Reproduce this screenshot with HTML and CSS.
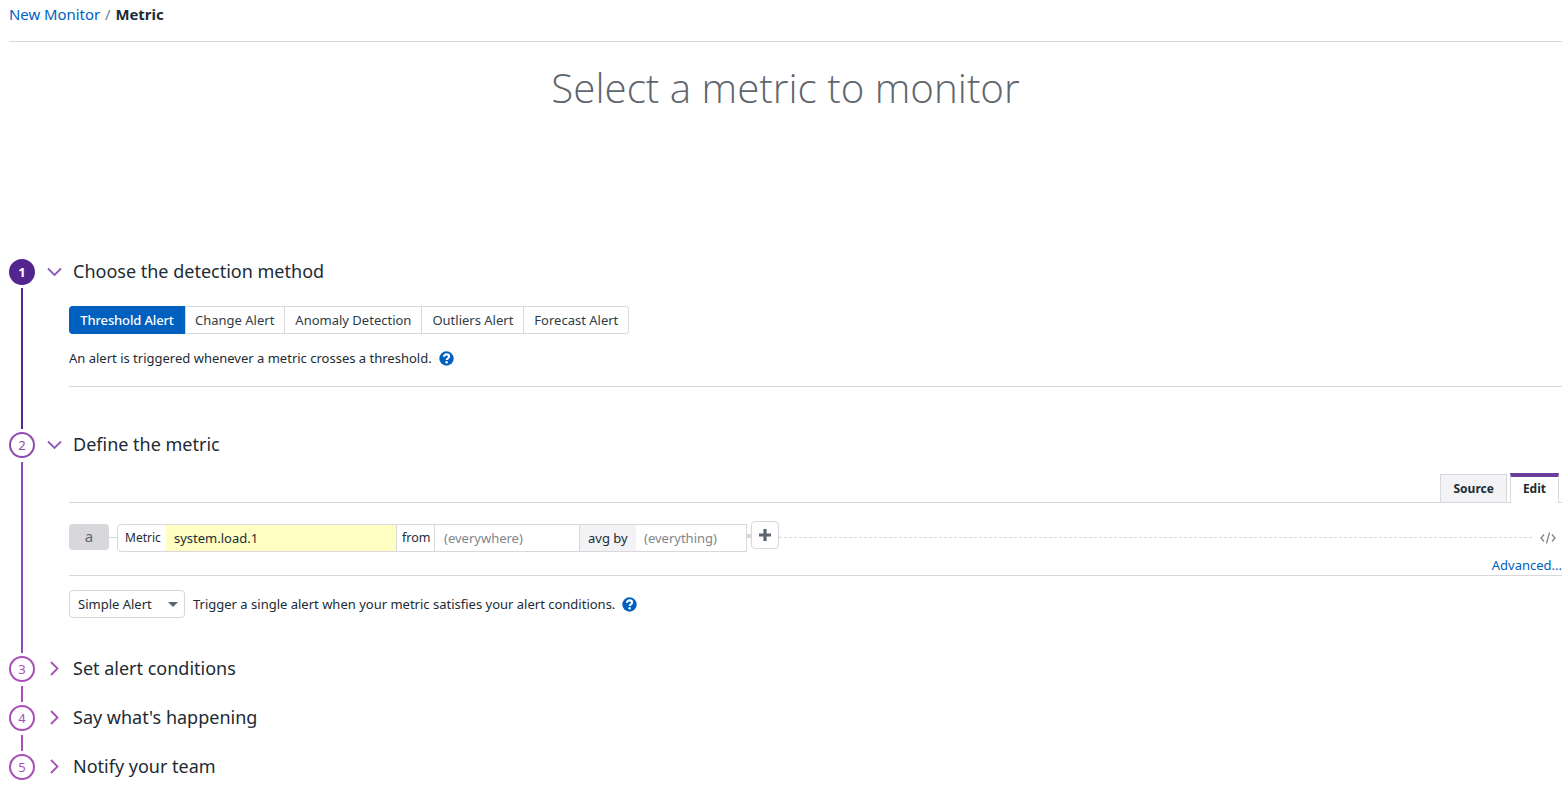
FILE: index.html
```html
<!DOCTYPE html>
<html lang="en">
<head>
    <meta charset="UTF-8">
    <title>New Monitor</title>
    <link rel="stylesheet" href="styles.css">
</head>
<body>
    <nav class="crumbs">
        <a href="#">New Monitor</a> <span class="sep">/</span> <strong>Metric</strong>
    </nav>
    <h1 class="page-title">Select a metric to monitor</h1>

    <main class="steps">
        <section class="step step-1">
            <div class="rail">
                <span class="num done">1</span>
                <span class="line dark"></span>
            </div>
            <div class="content">
                <h2 class="step-head">
                    <svg class="chev open-dark" width="15" height="15" viewBox="0 0 15 15"><path d="M1 4.5l6.500 6.500L14 4.500"/></svg>
                    Choose the detection method
                </h2>
                <div class="body">
                    <div class="seg">
                        <button class="active">Threshold Alert</button>
                        <button>Change Alert</button>
                        <button>Anomaly Detection</button>
                        <button>Outliers Alert</button>
                        <button>Forecast Alert</button>
                    </div>
                    <p class="desc">An alert is triggered whenever a metric crosses a threshold.
                        <svg class="help" width="15" height="15" viewBox="0 0 15 15"><circle cx="7.5" cy="7.5" r="7.2"/><path class="q" d="M5 5.8c0-1.5 1.1-2.4 2.6-2.4s2.5.9 2.5 2.1c0 1.9-2.4 1.8-2.4 3.5"/><circle class="dot" cx="7.6" cy="11.2" r="1.2"/></svg>
                    </p>
                    <hr class="rule">
                </div>
            </div>
        </section>

        <section class="step step-2">
            <div class="rail">
                <span class="num">2</span>
                <span class="line"></span>
            </div>
            <div class="content">
                <h2 class="step-head">
                    <svg class="chev open-dark" width="15" height="15" viewBox="0 0 15 15"><path d="M1 4.5l6.500 6.500L14 4.500"/></svg>
                    Define the metric
                </h2>
                <div class="body">
                    <div class="tabs">
                        <span class="tab">Source</span>
                        <span class="tab current">Edit</span>
                    </div>
                    <div class="query">
                        <span class="letter">a</span>
                        <span class="stub"></span>
                        <div class="qbox">
                            <span class="q-label q-metric">Metric</span>
                            <span class="q-value">system.load.1</span>
                            <span class="q-label q-from">from</span>
                            <span class="q-ph q-where">(everywhere)</span>
                            <span class="q-label q-avg">avg by</span>
                            <span class="q-ph q-by">(everything)</span>
                        </div>
                        <span class="stub short"></span>
                        <button class="plus"><svg width="12" height="12" viewBox="0 0 12 12"><path d="M4.4 0h3.2v4.4H12v3.2H7.6V12H4.4V7.6H0V4.4h4.4z"/></svg></button>
                        <span class="dash"></span>
                        <svg class="code" width="16" height="12" viewBox="0 0 16 12"><path d="M4 2.5L1 6l3 3.5M12 2.5L15 6l-3 3.5M9.5 .5l-3 11"/></svg>
                    </div>
                    <div class="adv"><a href="#">Advanced...</a></div>
                    <hr class="rule tight">
                    <div class="alert-row">
                        <div class="select">Simple Alert<span class="caret"></span></div>
                        <span class="desc-inline">Trigger a single alert when your metric satisfies your alert conditions.</span>
                        <svg class="help" width="15" height="15" viewBox="0 0 15 15"><circle cx="7.5" cy="7.5" r="7.2"/><path class="q" d="M5 5.8c0-1.5 1.1-2.4 2.6-2.4s2.5.9 2.5 2.1c0 1.9-2.4 1.8-2.4 3.5"/><circle class="dot" cx="7.6" cy="11.2" r="1.2"/></svg>
                    </div>
                </div>
            </div>
        </section>

        <section class="step step-small">
            <div class="rail">
                <span class="num">3</span>
                <span class="line pink"></span>
            </div>
            <div class="content">
                <h2 class="step-head">
                    <svg class="chev" width="15" height="15" viewBox="0 0 15 15"><path d="M4 1l6.500 6.500L4 14"/></svg>
                    Set alert conditions
                </h2>
            </div>
        </section>

        <section class="step step-small">
            <div class="rail">
                <span class="num">4</span>
                <span class="line pink"></span>
            </div>
            <div class="content">
                <h2 class="step-head">
                    <svg class="chev" width="15" height="15" viewBox="0 0 15 15"><path d="M4 1l6.500 6.500L4 14"/></svg>
                    Say what's happening
                </h2>
            </div>
        </section>

        <section class="step step-last">
            <div class="rail">
                <span class="num">5</span>
            </div>
            <div class="content">
                <h2 class="step-head">
                    <svg class="chev" width="15" height="15" viewBox="0 0 15 15"><path d="M4 1l6.500 6.500L4 14"/></svg>
                    Notify your team
                </h2>
            </div>
        </section>
    </main>
</body>
</html>
```

FILE: styles.css
```css
html, body {
    margin: 0;
    padding: 0;
    width: 100%;
    height: 100%;
    overflow: hidden;
    background: #fff;
    color: #1c2b34;
    font-family: "Noto Sans", "Open Sans", sans-serif;
    font-size: 13px;
}

a {
    color: #0060bf;
    text-decoration: none;
}

.crumbs {
    margin-left: 9px;
    height: 41px;
    line-height: 29px;
    font-size: 14.9px;
    border-bottom: 1px solid #d8d8dc;
}

.crumbs .sep {
    color: #7a8088;
    margin: 0 1px;
}

.crumbs strong {
    font-weight: 700;
}

.page-title {
    margin: 0;
    height: 217px;
    padding-top: 17px;
    padding-left: 9px;
    box-sizing: border-box;
    text-align: center;
    font-family: "Open Sans", sans-serif;
    font-size: 40.3px;
    line-height: 58px;
    font-weight: 300;
    color: #5f666d;
}

.steps {
    padding-left: 9px;
}

.step {
    display: flex;
}

.step-1 { height: 173px; }
.step-2 { height: 224px; }
.step-small { height: 49px; }
.step-last { height: 40px; }

.rail {
    width: 26px;
    flex: none;
    display: flex;
    flex-direction: column;
    align-items: center;
}

.num {
    width: 26px;
    height: 26px;
    flex: none;
    box-sizing: border-box;
    border: 2px solid #a84fb5;
    border-radius: 50%;
    color: #a84fb5;
    font-size: 13px;
    line-height: 22px;
    text-align: center;
}

.step-2 .num {
    border-color: #8c4bb0;
    color: #8c4bb0;
}

.num.done {
    background: #54258f;
    border-color: #54258f;
    color: #fff;
    font-weight: 700;
}

.line {
    flex: 1;
    width: 2px;
    margin: 4px 0 3px;
    background: #8c4bb0;
}

.line.dark {
    margin-top: 3px;
    background: #54258f;
}

.line.pink { background: #a84fb5; }

.content {
    flex: 1;
    min-width: 0;
    padding-left: 12px;
}

.step-head {
    margin: 0;
    height: 26px;
    padding-bottom: 2px;
    box-sizing: border-box;
    display: flex;
    align-items: center;
    gap: 11px;
    font-size: 18px;
    font-weight: 400;
    color: #1c2b34;
    white-space: nowrap;
}

.chev {
    flex: none;
    fill: none;
    stroke: #a84fb5;
    stroke-width: 1.8;
}

.chev.open-dark {
    stroke: #8c5bb8;
}

.body {
    margin-left: 22px;
}

.seg {
    display: inline-flex;
    margin-top: 21px;
    height: 28px;
    box-sizing: border-box;
    border: 1px solid #d8d8dc;
    border-left: none;
    border-radius: 4px;
    vertical-align: top;
}

.seg button {
    font-family: inherit;
    font-size: 13px;
    color: #2f3b44;
    background: #fff;
    border: none;
    border-left: 1px solid #d8d8dc;
    padding: 0 10px;
    margin: 0;
    height: 26px;
    line-height: 26px;
}

.seg button:last-child {
    border-radius: 0 4px 4px 0;
}

.seg button.active {
    background: #0060bf;
    color: #fff;
    font-weight: 500;
    letter-spacing: -0.14px;
    border: none;
    margin: -1px 0;
    height: 28px;
    padding: 0 11px 0 11px;
    border-radius: 4px 0 0 4px;
    width: 116px;
}

.seg button:nth-child(2) {
    padding-left: 9px;
}

.desc {
    margin: 14px 0 0;
    height: 20px;
    line-height: 20px;
    display: flex;
    align-items: center;
    gap: 7px;
}

.help {
    flex: none;
}

.help circle { fill: #0060bf; }
.help circle.dot { fill: #fff; }

.help .q {
    fill: none;
    stroke: #fff;
    stroke-width: 2.1;
}

.rule {
    border: none;
    border-top: 1px solid #d8d8dc;
    margin: 18px 0 0;
}

.rule.tight {
    margin: 0;
}

.tabs {
    display: flex;
    justify-content: flex-end;
    align-items: flex-end;
    gap: 3px;
    margin-top: 15px;
    height: 29px;
    padding-right: 3px;
    border-bottom: 1px solid #d8d8dc;
}

.tab {
    height: 28px;
    box-sizing: border-box;
    padding: 0 12px;
    line-height: 27px;
    font-size: 12px;
    font-weight: 700;
    background: #f3f3f6;
    border: 1px solid #d8d8dc;
    border-bottom: none;
}

.tab.current {
    height: 30px;
    margin-bottom: -1px;
    background: #fff;
    border-top: 4px solid #6b3d9a;
    line-height: 24px;
}

.query {
    display: flex;
    align-items: flex-start;
    margin-top: 21px;
    height: 27px;
}

.letter {
    width: 40px;
    height: 26px;
    flex: none;
    border-radius: 4px;
    background: #d8d8dc;
    color: #5b6470;
    font-size: 15px;
    line-height: 25px;
    text-align: center;
}

.stub {
    width: 8px;
    height: 1px;
    flex: none;
    margin-top: 13px;
    background: #d8d8dc;
}

.stub.short {
    width: 4px;
    height: 4px;
    margin-top: 10px;
}

.qbox {
    display: flex;
    width: 630px;
    height: 28px;
    flex: none;
    box-sizing: border-box;
    border: 1px solid #d8d8dc;
    border-radius: 4px 0 0 4px;
    line-height: 26px;
}

.qbox > span {
    display: block;
    white-space: nowrap;
}

.q-metric {
    width: 48px;
    padding-left: 7px;
    box-sizing: border-box;
    font-size: 12px;
}

.q-value {
    width: 231px;
    padding-left: 8px;
    box-sizing: border-box;
    background: #ffffc4;
    border-right: 1px solid #d8d8dc;
    line-height: 27px;
}

.q-from {
    width: 38px;
    box-sizing: border-box;
    padding-left: 5px;
    border-right: 1px solid #d8d8dc;
    font-size: 12.5px;
}

.q-ph {
    color: #7f858c;
    padding-left: 9px;
    box-sizing: border-box;
    line-height: 27px;
}

.q-where {
    width: 145px;
    border-right: 1px solid #d8d8dc;
}

.q-avg {
    width: 56px;
    box-sizing: border-box;
    padding-left: 8px;
    background: #f3f3f6;
}

.q-by {
    flex: 1;
    padding-left: 8px;
}

.plus {
    width: 28px;
    height: 28px;
    flex: none;
    margin: -3px 0 0;
    padding: 0;
    box-sizing: border-box;
    display: flex;
    align-items: center;
    justify-content: center;
    background: #fff;
    border: 1px solid #d8d8dc;
    border-radius: 4px;
}

.plus path {
    fill: #5b6470;
}

.dash {
    flex: 1;
    height: 0;
    margin-top: 13px;
    border-top: 1px dashed #d8d8dc;
}

.code {
    flex: none;
    margin: 8px 6px 0 8px;
    fill: none;
    stroke: #7f858c;
    stroke-width: 1.3;
}

.adv {
    height: 24px;
    text-align: right;
    line-height: 28px;
}

.alert-row {
    display: flex;
    align-items: center;
    margin-top: 14px;
    height: 28px;
}

.select {
    width: 116px;
    height: 28px;
    flex: none;
    box-sizing: border-box;
    border: 1px solid #d8d8dc;
    border-radius: 4px;
    padding-left: 8px;
    line-height: 26px;
    position: relative;
}

.caret {
    position: absolute;
    right: 6px;
    top: 11px;
    border: 5px solid transparent;
    border-top: 5px solid #5b6470;
    border-bottom: none;
}

.desc-inline {
    margin: 0 7px 0 8px;
}
```
